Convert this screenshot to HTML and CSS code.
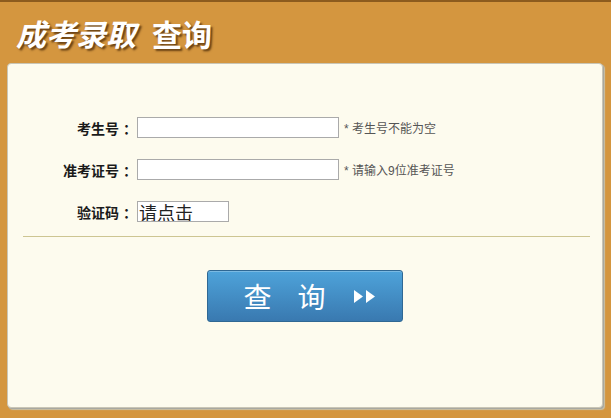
FILE: index.html
```html
<!DOCTYPE html>
<html lang="zh-CN">
<head>
<meta charset="utf-8">
<title>成考录取查询</title>
<link rel="stylesheet" href="styles.css">
</head>
<body>
<div class="header">
  <h1 class="title"><em>成考录取</em><span class="title-sub">查询</span></h1>
</div>
<div class="panel">
  <form class="form">
    <div class="row">
      <label class="label">考生号<span class="colon">：</span></label>
      <input class="field" type="text">
      <span class="hint">* 考生号不能为空</span>
    </div>
    <div class="row">
      <label class="label">准考证号<span class="colon">：</span></label>
      <input class="field" type="text">
      <span class="hint">* 请输入9位准考证号</span>
    </div>
    <div class="row">
      <label class="label">验证码<span class="colon">：</span></label>
      <input class="captcha" type="text" value="请点击">
    </div>
  </form>
  <div class="divider"></div>
  <div class="actions">
    <button class="btn" type="button">
      <span class="btn-char">查</span>
      <span class="btn-char">询</span>
      <svg class="btn-arrows" width="21" height="13" viewBox="0 0 21 13"><polygon points="0,0 9,6.5 0,13" fill="#fff"/><polygon points="12,0 21,6.5 12,13" fill="#fff"/></svg>
    </button>
  </div>
</div>
</body>
</html>
```
FILE: styles.css
```css
html, body {
  height: 100%;
}
body {
  margin: 0;
  background: #d4963f;
  border-top: 2px solid #8c5b1e;
  box-sizing: border-box;
  font-family: "Liberation Sans", "Noto Sans CJK SC", sans-serif;
  color: #222;
}
.header {
  height: 61px;
  display: flex;
  align-items: center;
  padding-left: 16px;
}
.title {
  margin: 0;
  font-size: 30px;
  font-weight: bold;
  color: #fff;
  text-shadow: 2px 2px 2px rgba(60, 30, 0, 0.7);
  font-family: "Noto Sans CJK SC", sans-serif;
  line-height: 1;
  display: flex;
}
.title em {
  font-style: italic;
}
.title-sub {
  margin-left: 16px;
}
.panel {
  margin: 0 8px 0 7px;
  height: 345px;
  box-sizing: border-box;
  background: #fdfbee;
  border: 1px solid #c9c5b5;
  border-radius: 4px;
  box-shadow: 1px 1px 0 #a8a8a0, 2px 2px 1px #c8c0a8;
}
.form {
  padding-top: 53px;
  display: flex;
  flex-direction: column;
  gap: 21px;
  margin: 0;
}
.row {
  display: flex;
  align-items: center;
  height: 21px;
}
.label {
  width: 125px;
  text-align: right;
  font-size: 14px;
  font-weight: bold;
  color: #1a1a1a;
  font-family: "Noto Sans CJK SC", sans-serif;
  margin-right: 4px;
}
.colon {
  padding-left: 4px;
  margin-right: -4px;
}
.field {
  width: 202px;
  height: 21px;
  box-sizing: border-box;
  border: 1px solid #aaa;
  background: #fff;
  margin: 0;
  padding: 0 2px;
}
.hint {
  margin-left: 5px;
  font-size: 12px;
  color: #555;
}
.captcha {
  width: 92px;
  height: 21px;
  box-sizing: border-box;
  border: 1px solid #aaa;
  background: #fff;
  margin: 0;
  padding: 0 1px;
  font-size: 18px;
  color: #222;
  font-family: "Noto Sans CJK SC", sans-serif;
  line-height: 19px;
}
.divider {
  margin: 14px 12px 0 15px;
  height: 1px;
  background: #cdc592;
}
.actions {
  display: flex;
  justify-content: center;
  padding-top: 33px;
}
.btn {
  width: 196px;
  height: 52px;
  box-sizing: border-box;
  border: 1px solid #2f6894;
  border-radius: 3px;
  background: linear-gradient(#4ea3da, #3979b0);
  box-shadow: inset 0 1px 0 rgba(255,255,255,0.25);
  display: flex;
  align-items: center;
  justify-content: center;
  gap: 26px;
  padding: 0 0 0 8px;
  color: #fff;
  font-family: "Noto Sans CJK SC", sans-serif;
  font-size: 28px;
  cursor: pointer;
}
.btn-char {
  line-height: 1;
}
.btn-arrows {
  display: block;
  margin-left: 2px;
}
```
